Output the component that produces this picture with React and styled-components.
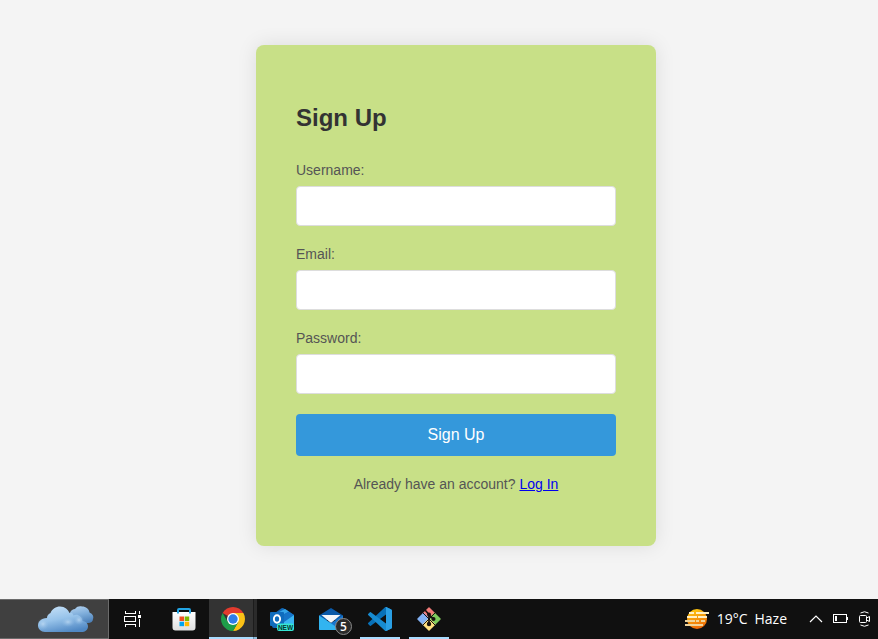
import React from "react";
import styled, { createGlobalStyle, css } from "styled-components";

const GlobalStyle = createGlobalStyle`
  *, *::before, *::after { box-sizing: border-box; }
  body {
    margin: 0;
    background: #f4f4f4;
    font-family: "Liberation Sans", Arial, sans-serif;
  }
`;

const Page = styled.div`
  display: flex;
  flex-direction: column;
  min-height: 100vh;
`;

const Main = styled.main`
  flex: 1;
  display: flex;
  align-items: center;
  justify-content: center;
  padding: 0 0 8px 34px;
`;

const Card = styled.section`
  width: 100%;
  max-width: 400px;
  padding: 59px 40px 54px;
  border-radius: 8px;
  background: #c8e087;
  box-shadow: 0 0 20px rgba(0, 0, 0, 0.1);
`;

const Title = styled.h1`
  margin: 0 0 30px;
  color: #333;
  font-size: 24px;
  line-height: 28px;
`;

const Form = styled.form`
  display: flex;
  flex-direction: column;
  gap: 20px;
`;

const Field = styled.div`
  display: flex;
  flex-direction: column;
  gap: 8px;
`;

const Label = styled.label`
  color: #555;
  font-size: 14px;
  line-height: 16px;
`;

const Input = styled.input`
  width: 100%;
  height: 40px;
  padding: 10px;
  border: 1px solid #ddd;
  border-radius: 4px;
  background: #fff;
  font: inherit;
  font-size: 14px;
`;

const SubmitButton = styled.button`
  width: 100%;
  padding: 12px;
  border: 0;
  border-radius: 4px;
  background: #3498db;
  color: #fff;
  font: inherit;
  font-size: 16px;
  line-height: 18px;
  cursor: pointer;
`;

const LoginHint = styled.p`
  margin: 20px 0 0;
  color: #555;
  font-size: 14px;
  line-height: 16px;
  text-align: center;
`;

const LoginLink = styled.a`
  color: #0000ee;
`;

const Taskbar = styled.footer`
  display: flex;
  justify-content: space-between;
  height: 40px;
  background: #101010;
  color: #fff;
  overflow: hidden;
`;

const Apps = styled.nav`
  display: flex;
  gap: 1px;
`;

const barButton = css`
  display: flex;
  align-items: center;
  justify-content: center;
  padding: 0;
  border: 0;
  background: transparent;
  color: inherit;
  svg { display: block; flex: none; }
`;

const NewsButton = styled.button`
  ${barButton}
  width: 109px;
  margin-right: 1px;
  padding-left: 24px;
  border: solid #6b6b6b;
  border-width: 1px 1px 1px 0;
  background: #404040;
`;

const AppButton = styled.button`
  ${barButton}
  position: relative;
  width: 48px;
  ${({ $active }) => $active && css`
    background: linear-gradient(to right, #333 44px, #1c1c1c 44px, #1c1c1c 45px, #2b2b2b 45px);
  `}
  ${({ $line }) => $line && css`
    &::after {
      content: "";
      position: absolute;
      bottom: 0;
      left: ${$line === "wide" ? "0" : "4px"};
      right: ${$line === "wide" ? "0" : "4px"};
      height: 2px;
      background: ${$line === "wide"
        ? "linear-gradient(to right, #a9dcff 44px, #6f93ab 44px, #6f93ab 45px, #8fbbd9 45px)"
        : "#a9dcff"};
    }
  `}
`;

const Badge = styled.span`
  position: absolute;
  right: 3px;
  bottom: 4px;
  display: flex;
  align-items: center;
  justify-content: center;
  width: 17px;
  height: 17px;
  border: 1px solid #8a8a8a;
  border-radius: 50%;
  background: #2b2b2b;
  color: #fff;
  font: 600 12px/15px "Open Sans", "Noto Sans", sans-serif;
`;

const Tray = styled.div`
  display: flex;
  gap: 10px;
  padding-right: 7px;
`;

const WeatherButton = styled.button`
  ${barButton}
  gap: 8px;
  margin-right: 12px;
  font: 14px/20px "Open Sans", "Noto Sans", sans-serif;
`;

const WeatherText = styled.span`
  display: flex;
  gap: 7px;
`;

const TrayButton = styled.button`
  ${barButton}
`;

const CloudIcon = () => (
  <svg width="56" height="28" viewBox="0 0 56 28" aria-hidden="true">
    <defs>
      <linearGradient id="cloudBack" x1="0.2" y1="0" x2="0.5" y2="1">
        <stop offset="0" stopColor="#b0d0ee" />
        <stop offset="0.5" stopColor="#7faedb" />
        <stop offset="1" stopColor="#4f83bb" />
      </linearGradient>
      <linearGradient id="cloudFront" x1="0.2" y1="0" x2="0.6" y2="1">
        <stop offset="0" stopColor="#c5e0f7" />
        <stop offset="0.5" stopColor="#97c3ea" />
        <stop offset="1" stopColor="#5088c4" />
      </linearGradient>
      <radialGradient id="cloudPuff">
        <stop offset="0" stopColor="#c6dff5" stopOpacity="0.7" />
        <stop offset="1" stopColor="#8fbce6" stopOpacity="0" />
      </radialGradient>
    </defs>
    <path d="M32 8c1-3 3-4 5-4 2-3 5-3 7-2.500 4 0 7 2.500 7.500 6C55 9 56 12 55 14c0 3-3 4.500-6 4L33 18z" fill="url(#cloudBack)" />
    <path d="M7 27C3 27 0 24 0 20.500c0-4 3-7 9-7.500 0-2 1-4 3.500-5C14 4 18 1.500 22 1.500c5 0 8 3 9.500 6.500 2-.5 3 0 4 2.500 4-2 8 .5 9 5.500 4 .5 5.500 3 5.500 5.500 0 3.500-3 5.500-6.500 5.500z" fill="url(#cloudFront)" />
    <ellipse cx="30" cy="17" rx="7" ry="5" fill="url(#cloudPuff)" />
    <ellipse cx="41" cy="15" rx="5" ry="5" fill="url(#cloudPuff)" />
    <circle cx="5" cy="19" r="6" fill="url(#cloudPuff)" />
  </svg>
);

const TaskViewIcon = () => (
  <svg width="22" height="16" viewBox="0 0 22 16" fill="none" stroke="#fff" shapeRendering="crispEdges" aria-hidden="true">
    <path d="M1.500 0v2.500h10V0M.5 5.500h11v5H.5zM1.500 16v-2.500h10V16M15.500 0v3M15.500 8v8" />
    <rect x="14" y="4" width="3" height="3" fill="#fff" stroke="none" />
  </svg>
);

const StoreIcon = () => (
  <svg width="24" height="24" viewBox="0 0 24 24" aria-hidden="true">
    <defs>
      <linearGradient id="storeBag" x1="0" y1="0" x2="0" y2="1">
        <stop offset="0" stopColor="#fff" />
        <stop offset="1" stopColor="#dedede" />
      </linearGradient>
    </defs>
    <path d="M.5 5h23v15.500a3 3 0 0 1-3 3h-17a3 3 0 0 1-3-3z" fill="url(#storeBag)" />
    <path d="M6 6.500V3a1 1 0 0 1 1-1h10a1 1 0 0 1 1 1v3.500" fill="none" stroke="#22a5e4" strokeWidth="2" />
    <path d="M7.500 9.500H12V14H7.500z" fill="#f25022" />
    <path d="M12.700 9.500h4.500V14h-4.500z" fill="#7fba00" />
    <path d="M7.500 14.700H12v4.500H7.500z" fill="#00a4ef" />
    <path d="M12.700 14.700h4.500v4.500h-4.500z" fill="#ffb900" />
  </svg>
);

const ChromeIcon = () => (
  <svg width="24" height="24" viewBox="0 0 24 24" aria-hidden="true">
    <path d="M12 12 1.610 6A12 12 0 0 1 22.390 6z" fill="#e33b2e" />
    <path d="M12 6h10.390A12 12 0 0 1 12 24l5.200-9z" fill="#fbc116" />
    <path d="M1.610 6A12 12 0 0 0 12 24l5.200-9H6.800z" fill="#1e9e4a" />
    <circle cx="12" cy="12" r="6" fill="#fff" />
    <circle cx="12" cy="12" r="4.700" fill="#2f7de9" />
  </svg>
);

const OutlookIcon = () => (
  <svg width="24" height="24" viewBox="0 0 24 24" aria-hidden="true">
    <path d="M2 8 11.500 1.200a2 2 0 0 1 2 0L24 8v11a2 2 0 0 1-2 2H4a2 2 0 0 1-2-2z" fill="#1066b5" />
    <path d="M4 7.500 15 2l4 2.500L7 11z" fill="#35a4e8" />
    <path d="M10 9.500 19 4.500 24 8l-10 7z" fill="#1674c8" />
    <path d="M24 8v11a2 2 0 0 1-2 2H6l8-6z" fill="#39b4f2" />
    <rect x="0" y="5" width="14" height="14" rx="1" fill="#0f6cbd" />
    <ellipse cx="7" cy="12" rx="3.100" ry="3.700" fill="none" stroke="#fff" strokeWidth="1.900" />
    <rect x="7" y="16.500" width="17" height="7.500" rx="2" fill="#35e6d4" />
    <text x="15.500" y="22.600" textAnchor="middle" fontFamily="Liberation Sans, Arial, sans-serif" fontSize="6.500" fontWeight="700" fill="#06352f">NEW</text>
  </svg>
);

const MailIcon = () => (
  <svg width="24" height="24" viewBox="0 0 24 24" aria-hidden="true">
    <path d="M0 8.500 12 1l12 7.500V13H0z" fill="#0a59a8" />
    <path d="M2.500 8h19L12 16z" fill="#f3f6fa" />
    <path d="M0 8.500 12 16l12-7.500V22a1 1 0 0 1-1 1H1a1 1 0 0 1-1-1z" fill="#1976ce" />
    <path d="M0 8.500 22 23H1a1 1 0 0 1-1-1z" fill="#32b4f0" />
  </svg>
);

const CodeIcon = () => (
  <svg width="24" height="24" viewBox="0 0 24 24" aria-hidden="true">
    <path d="m18 0 5 2.300q1 .5 1 1.500v3.700h-6L3.200 18.600a1 1 0 0 1-1.300.1L.4 17.300a1 1 0 0 1 0-1.500L16.700.6Q17.300 0 18 0z" fill="#0871b8" />
    <path d="M18 24 23 21.700q1-.5 1-1.500v-3.700h-6L3.200 5.400a1 1 0 0 0-1.300-.1L.4 6.700a1 1 0 0 0 0 1.500l16.300 15.200q.6.600 1.300.6z" fill="#178bd1" />
    <path d="M17 23.600c.5.500 1.200.4 1.700.2l4.500-2.200q.8-.4.8-1.300V3.700q0-.9-.8-1.300L18.700.2C18.200 0 17.500-.1 17 .4c.5-.3 1 0 1 .8v21.600c0 .8-.5 1.100-1 .8z" fill="#2a9fe4" />
  </svg>
);

const GitIcon = () => (
  <svg width="24" height="24" viewBox="0 0 24 24" aria-hidden="true">
    <g strokeWidth="1.500" strokeLinejoin="round">
      <path d="m12 1 5.500 5.500L12 12 6.500 6.500z" fill="#f37b78" stroke="#f37b78" />
      <path d="m17.500 6.500L23 12l-5.500 5.500L12 12z" fill="#7ecb5c" stroke="#7ecb5c" />
      <path d="m6.500 6.500L12 12l-5.500 5.500L1 12z" fill="#83b2f5" stroke="#83b2f5" />
      <path d="m12 12 5.500 5.500L12 23l-5.500-5.500z" fill="#ffe080" stroke="#ffe080" />
    </g>
    <path d="m5.500 5.500 13 13M18.500 5.500l-13 13" stroke="#17120f" strokeWidth="1" />
    <path d="m8 3 4 4.500V17M12 8l4.500 4" fill="none" stroke="#17120f" strokeWidth="1.700" />
    <g fill="#17120f">
      <circle cx="12" cy="7.500" r="2" />
      <circle cx="16.500" cy="12" r="2" />
      <circle cx="12" cy="17" r="2.200" />
    </g>
  </svg>
);

const HazeIcon = () => (
  <svg width="24" height="22" viewBox="0 0 24 22" aria-hidden="true">
    <defs>
      <linearGradient id="hazeSun" x1="0.3" y1="0" x2="0.6" y2="1">
        <stop offset="0" stopColor="#ffc90f" />
        <stop offset="1" stopColor="#ec6408" />
      </linearGradient>
    </defs>
    <circle cx="12" cy="11" r="10" fill="url(#hazeSun)" />
    <g fill="none" strokeWidth="2">
      <path d="M4 5h5M11 5h13M2 9h10M13 9h9" stroke="#fff0c4" />
      <path d="M0 13h10M11 13h3M16 13h4M0 17h18" stroke="#efd39a" />
    </g>
  </svg>
);

const ChevronIcon = () => (
  <svg width="14" height="8" viewBox="0 0 14 8" fill="none" stroke="#fff" strokeWidth="1.200" aria-hidden="true">
    <path d="m1 7 6-6 6 6" />
  </svg>
);

const BatteryIcon = () => (
  <svg width="16" height="10" viewBox="0 0 16 10" shapeRendering="crispEdges" aria-hidden="true">
    <path d="M.5.5h13v8H.5z" fill="none" stroke="#fff" />
    <path d="M2 2h2v5H2zM14 3h1v3h-1z" fill="#fff" />
  </svg>
);

const CameraIcon = () => (
  <svg width="12" height="16" viewBox="0 0 12 16" fill="none" stroke="#fff" aria-hidden="true">
    <rect x=".5" y="4.500" width="7" height="7" rx="1" />
    <path d="m7.500 7 3-1.500v5l-3-1.500M1.500 2Q5.500-.5 9.500 2M1.500 14q4 2.500 8 0" />
  </svg>
);

const fields = [
  { id: "username", label: "Username:", type: "text" },
  { id: "email", label: "Email:", type: "email" },
  { id: "password", label: "Password:", type: "password" },
];

const apps = [
  { name: "Task View", Icon: TaskViewIcon },
  { name: "Microsoft Store", Icon: StoreIcon },
  { name: "Google Chrome", Icon: ChromeIcon, active: true, line: "wide" },
  { name: "Outlook", Icon: OutlookIcon },
  { name: "Mail", Icon: MailIcon, badge: 5 },
  { name: "Visual Studio Code", Icon: CodeIcon, line: "short" },
  { name: "Git", Icon: GitIcon, line: "short" },
];

export default function App() {
  return (
    <Page>
      <GlobalStyle />
      <Main>
        <Card>
          <Title>Sign Up</Title>
          <Form onSubmit={(event) => event.preventDefault()}>
            {fields.map(({ id, label, type }) => (
              <Field key={id}>
                <Label htmlFor={id}>{label}</Label>
                <Input id={id} name={id} type={type} />
              </Field>
            ))}
            <SubmitButton type="submit">Sign Up</SubmitButton>
          </Form>
          <LoginHint>
            Already have an account? <LoginLink href="#login">Log In</LoginLink>
          </LoginHint>
        </Card>
      </Main>
      <Taskbar>
        <Apps aria-label="Taskbar">
          <NewsButton type="button" aria-label="Weather and news"><CloudIcon /></NewsButton>
          {apps.map(({ name, Icon, active, line, badge }) => (
            <AppButton key={name} type="button" aria-label={name} $active={active} $line={line}>
              <Icon />
              {badge && <Badge>{badge}</Badge>}
            </AppButton>
          ))}
        </Apps>
        <Tray>
          <WeatherButton type="button">
            <HazeIcon />
            <WeatherText><span>19°C</span><span>Haze</span></WeatherText>
          </WeatherButton>
          <TrayButton type="button" aria-label="Show hidden icons"><ChevronIcon /></TrayButton>
          <TrayButton type="button" aria-label="Battery"><BatteryIcon /></TrayButton>
          <TrayButton type="button" aria-label="Meet now"><CameraIcon /></TrayButton>
        </Tray>
      </Taskbar>
    </Page>
  );
}
